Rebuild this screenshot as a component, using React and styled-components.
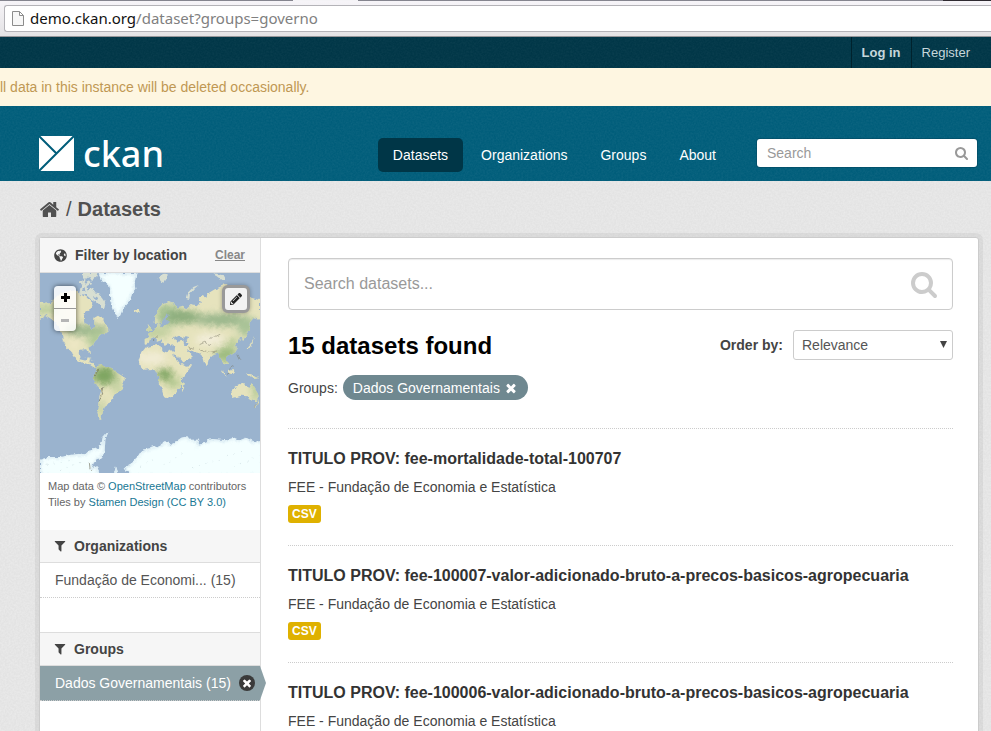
import React from "react";
import styled, { createGlobalStyle, css } from "styled-components";
import { FaGlobeAmericas, FaPencilAlt } from "react-icons/fa";

const grain = (opacity) =>
  `url("data:image/svg+xml,${encodeURIComponent(
    `<svg xmlns='http://www.w3.org/2000/svg' width='100' height='100'><filter id='n'><feTurbulence type='fractalNoise' baseFrequency='0.55' numOctaves='2' stitchTiles='stitch'/><feColorMatrix values='0 0 0 0 1  0 0 0 0 1  0 0 0 0 1  1.6 0 0 0 -0.5'/></filter><rect width='100' height='100' filter='url(#n)' opacity='${opacity}'/></svg>`
  )}")`;

const Global = createGlobalStyle`
  *, *::before, *::after { box-sizing: border-box; }
  body {
    margin: 0;
    font: 14px/20px "Liberation Sans", Arial, sans-serif;
    color: #444;
    background: #e8e8e8;
  }
  h1, h2, h3, p, ul { margin: 0; padding: 0; }
  ul { list-style: none; }
  a { color: inherit; text-decoration: none; }
  button, input, select { font: inherit; color: inherit; margin: 0; }
  button { border: 0; padding: 0; background: none; cursor: pointer; }
  svg { display: block; }
`;

const Page = styled.div`
  display: flex;
  flex-direction: column;
  height: 100vh;
  overflow: hidden;
`;

/* Browser toolbar */
const TabEdge = styled.div`
  flex: none;
  display: flex;
  height: 1px;
  background: #85858f;
  &::before { content: ""; width: 65px; margin-left: 293px; background: #f4f3f6; }
  &::after { content: ""; width: 48px; margin-left: auto; background: #2f2a31; }
`;
const Toolbar = styled.div`
  flex: none;
  height: 36px;
  padding: 4px 0 0 4px;
  background: linear-gradient(#f6f4f8, #e4e3e5);
  border-bottom: 1px solid #96969a;
`;
const AddressField = styled.div`
  display: flex;
  align-items: center;
  gap: 6px;
  height: 27px;
  padding: 0 0 1px 7px;
  background: #fff;
  border: 1px solid #b4b3b8;
  border-right: 0;
  border-radius: 3px 0 0 3px;
`;
const Address = styled.div`
  font: 15px/22px "Noto Sans", "Open Sans", sans-serif;
  color: #808080;
  span { color: #111; }
`;

/* Header */
const AccountBar = styled.nav`
  flex: none;
  display: flex;
  justify-content: flex-end;
  height: 31px;
  padding-right: 11px;
  background: ${grain(0.04)} #003647;
`;
const AccountLink = styled.a`
  padding: 0 10px;
  border-left: 1px solid #00222d;
  font-size: 13px;
  font-weight: ${(p) => (p.$strong ? 700 : 400)};
  line-height: 31px;
  color: #c6d7db;
`;
const Notice = styled.p`
  flex: none;
  height: 38px;
  line-height: 38px;
  background: #fef6e1;
  color: #c09853;
  white-space: nowrap;
`;
const Masthead = styled.header`
  flex: none;
  display: flex;
  align-items: center;
  height: 75px;
  padding: 23px 14px 0 39px;
  background: ${grain(0.05)} #005d7a;
  color: #fff;
`;
const Logo = styled.a`
  display: flex;
  align-items: center;
  gap: 8px;
  height: 36px;
  margin: 0 auto 2px 0;
  font: 500 36px/36px "Noto Sans", "Open Sans", sans-serif;
`;
const MainNav = styled.nav`
  display: flex;
  gap: 3px;
  margin-right: 26px;
`;
const NavLink = styled.a`
  padding: 0 15px;
  border-radius: 5px;
  line-height: 34px;
  ${(p) => p.$active && css`background: #003647;`}
`;
const SiteSearch = styled.form`
  display: flex;
  align-items: center;
  width: 220px;
  height: 28px;
  margin-bottom: 4px;
  padding: 0 8px 0 10px;
  background: #fff;
  border-radius: 3px;
  box-shadow: 0 0 0 1px rgba(0, 40, 60, 0.25);
  color: #999;
`;
const PlainInput = styled.input`
  flex: 1;
  min-width: 0;
  padding: 0;
  border: 0;
  outline: 0;
  background: transparent;
  color: #555;
  &::placeholder { color: #999; opacity: 1; }
`;

/* Body */
const Content = styled.main`
  flex: 1;
  min-height: 0;
  overflow: auto;
  scrollbar-width: none;
  padding: 0 12px 0 39px;
  background: ${grain(0.3)} #e3e3e3;
`;
const Breadcrumb = styled.nav`
  display: flex;
  align-items: center;
  gap: 6px;
  height: 56px;
  font-size: 20px;
  color: #505050;
`;
const Wrapper = styled.div`
  display: grid;
  grid-template-columns: 221px 1fr;
  background: #fff;
  border: 1px solid #ccc;
  border-radius: 3px;
  box-shadow: 0 0 0 4px rgba(0, 0, 0, 0.05);
`;
const Sidebar = styled.aside`
  border-right: 1px solid #ddd;
`;
const Module = styled.section`
  margin-bottom: ${(p) => p.$gap || 0}px;
`;
const ModuleHeading = styled.h2`
  display: flex;
  align-items: center;
  gap: 8px;
  height: ${(p) => p.$height || 33}px;
  padding: 0 15px 0 14px;
  background: #f6f6f6;
  border: 0 solid #ddd;
  border-width: ${(p) => (p.$ruled ? 1 : 0)}px 0 1px;
  font-size: 14px;
  line-height: 18px;
`;
const ClearLink = styled.a`
  margin-left: auto;
  font-size: 12px;
  color: #888;
  text-decoration: underline;
`;
const MapBox = styled.div`
  position: relative;
  height: 200px;
  background: #9ab3ce;
  overflow: hidden;
  > svg { width: 100%; height: 100%; }
`;
const ZoomButtons = styled.div`
  position: absolute;
  top: 13px;
  left: 14px;
  border-radius: 4px;
  background: rgba(255, 255, 255, 0.85);
  box-shadow: 0 0 5px rgba(0, 0, 0, 0.6);
`;
const ZoomButton = styled.button`
  display: grid;
  place-items: center;
  width: 22px;
  height: 22px;
  color: #000;
  & + & { height: 23px; border-top: 1px solid #999; }
  &:disabled { color: #b5b5b5; }
`;
const DrawButton = styled.button`
  position: absolute;
  top: 12px;
  right: 10px;
  display: grid;
  place-items: center;
  width: 28px;
  height: 28px;
  border: 3px solid #999;
  border-radius: 6px;
  background: #f2f2f2;
  box-shadow: 0 0 4px rgba(0, 0, 0, 0.3);
  color: #222;
`;
const Attribution = styled.p`
  padding: 5px 8px 0;
  height: 57px;
  font-size: 11px;
  line-height: 16px;
  white-space: nowrap;
  color: #666;
  a { color: #187794; }
`;
const Facet = styled.a`
  position: relative;
  display: flex;
  align-items: center;
  gap: 8px;
  height: 35px;
  padding-left: 15px;
  border-bottom: 1px dotted #ccc;
  color: #555;
  white-space: nowrap;
  ${(p) => p.$active && css`
    background: #8ca0a6;
    color: #fff;
    &::after {
      content: "";
      position: absolute;
      top: 0;
      left: 100%;
      width: 6px;
      height: 34px;
      background: #8ca0a6;
      clip-path: polygon(0 0, 100% 50%, 0 100%);
    }
  `}
`;
const RemoveDot = styled.span`
  display: grid;
  place-items: center;
  width: 16px;
  height: 16px;
  border-radius: 50%;
  background: #3a3a3a;
  color: #fff;
`;
const Primary = styled.section`
  min-width: 0;
  padding: 20px 25px 0 27px;
`;
const DatasetSearch = styled.form`
  display: flex;
  align-items: center;
  height: 52px;
  padding: 0 13px 0 15px;
  border: 1px solid #ccc;
  border-radius: 4px;
  box-shadow: inset 0 1px 1px rgba(0, 0, 0, 0.08);
  font-size: 16px;
  color: #ccc;
`;
const ResultsBar = styled.div`
  display: flex;
  align-items: center;
  justify-content: space-between;
  height: 30px;
  margin-top: 20px;
`;
const ResultsTitle = styled.h1`
  padding-top: 2px;
  font-size: 24px;
  line-height: 30px;
  color: #000;
`;
const OrderBy = styled.label`
  display: flex;
  align-items: center;
  gap: 10px;
  font-weight: 700;
`;
const SelectBox = styled.span`
  position: relative;
  width: 160px;
  font-weight: 400;
  > svg { position: absolute; right: 6px; top: 11px; pointer-events: none; }
`;
const Select = styled.select`
  display: block;
  width: 100%;
  height: 30px;
  padding: 0 8px;
  appearance: none;
  border: 1px solid #ccc;
  border-radius: 3px;
  background: #fff;
  color: #555;
`;
const Filters = styled.div`
  display: flex;
  align-items: center;
  gap: 5px;
  height: 25px;
  margin: 15px 0 28px;
  line-height: 18px;
`;
const Pill = styled.span`
  display: flex;
  align-items: center;
  gap: 4px;
  height: 25px;
  padding: 0 10px;
  border-radius: 13px;
  background: #6f8890;
  color: #fff;
`;
const Dataset = styled.li`
  min-height: 117px;
  padding-top: 20px;
  border-top: 1px dotted #ccc;
`;
const DatasetTitle = styled.h3`
  font-size: 16px;
  line-height: 20px;
  color: #333;
`;
const Organization = styled.p`
  margin: 8px 0;
`;
const Format = styled.a`
  display: block;
  width: max-content;
  padding: 0 4px;
  border-radius: 3px;
  background: #dfb100;
  color: #fff;
  font-size: 12px;
  font-weight: 700;
  line-height: 18px;
`;

const paths = {
  search:
    "M1152 832q0-185-131.5-316.5t-316.5-131.5-316.5 131.5-131.5 316.5 131.5 316.5 316.5 131.5 316.5-131.5 131.5-316.5zm512 832q0 52-38 90t-90 38q-54 0-90-38l-343-342q-179 124-399 124-143 0-273.5-55.5t-225-150-150-225-55.5-273.5 55.5-273.5 150-225 225-150 273.5-55.5 273.5 55.5 225 150 150 225 55.5 273.5q0 220-124 399l343 343q37 37 37 90z",
  filter:
    "M1595 295q17 41-14 70l-493 493v742q0 42-39 59-13 5-25 5-27 0-45-19l-256-256q-19-19-19-45v-486l-493-493q-31-29-14-70 17-39 59-39h1280q42 0 59 39z",
  home:
    "M1472 992v480q0 26-19 45t-45 19h-384v-384h-256v384h-384q-26 0-45-19t-19-45v-480q0-1 .5-3t.5-3l575-474 575 474q1 2 1 6zm223-69l-62 74q-8 9-21 11h-3q-13 0-21-7l-692-577-692 577q-12 8-24 7-13-2-21-11l-62-74q-8-10-7-23.5t11-21.5l719-599q32-26 76-26t76 26l244 204v-195q0-14 9-23t23-9h192q14 0 23 9t9 23v408l219 182q10 8 11 21.5t-7 23.5z",
  times:
    "M1490 1322q0 40-28 68l-136 136q-28 28-68 28t-68-28l-294-294-294 294q-28 28-68 28t-68-28l-136-136q-28-28-28-68t28-68l294-294-294-294q-28-28-28-68t28-68l136-136q28-28 68-28t68 28l294 294 294-294q28-28 68-28t68 28l136 136q28 28 28 68t-28 68l-294 294 294 294q28 28 28 68z",
};

const Icon = ({ name, size, box = "0 0 1792 1792" }) => (
  <svg width={size} height={size} viewBox={box} fill="currentColor" aria-hidden="true">
    <path d={paths[name]} />
  </svg>
);

const land = [
  "M0 86L14 92 30 90 60 60 110 52 125 66 146 78 160 92 152 108 136 118 130 132 134 150 148 156 154 172 162 160 163 134 174 128 186 136 192 150 206 162 208 170 196 180 182 184 176 194 164 206 158 218 146 226 150 240 144 238 138 228 122 230 116 242 120 258 134 262 142 254 150 256 148 268 158 270 162 280 172 286 160 284 144 274 126 268 108 258 94 236 80 222 68 202 66 178 48 150 34 138 16 126 0 138Z",
  "M170 280L184 276 198 282 220 286 232 300 255 314 250 332 246 348 228 362 220 376 206 394 194 402 188 420 182 428 184 440 176 436 172 420 178 398 178 370 184 352 170 336 160 312 168 298Z",
  "M318 222L352 216 362 220 364 232 380 238 396 232 410 236 414 252 424 270 438 278 456 276 438 302 426 316 426 336 408 356 396 372 382 378 372 372 366 352 356 330 358 314 348 292 332 288 314 290 300 278 296 264 304 240Z",
  "M426 332L434 330 432 346 426 358Z",
  "M314 214L314 198 328 192 324 182 340 176 348 166 356 156 344 148 346 132 352 112 368 92 386 84 400 90 410 104 428 98 442 106 452 96 470 100 484 86 476 74 488 66 500 74 502 62 522 50 544 40 558 32 576 44 606 64 634 74 660 82 660 140 640 136 628 150 630 172 618 190 610 200 600 194 596 206 586 212 590 226 580 242 566 248 558 256 564 272 556 276 546 266 540 250 530 240 520 244 508 254 502 278 494 268 488 246 476 240 460 238 448 228 440 230 454 246 458 254 440 264 428 272 414 250 404 232 406 216 392 218 384 210 374 216 366 202 354 206 342 192 330 198 326 210Z",
  "M574 352L590 340 604 334 616 330 622 342 630 344 634 330 642 340 652 356 656 370 648 384 634 382 622 370 604 368 582 374 576 366Z",
  "M318 174L326 164 322 150 332 166 334 174Z",
  "M282 112L296 110 300 118 290 122 282 118Z",
  "M642 402L650 390 654 378 656 386 648 400Z",
  "M540 290L556 304 562 312 550 304Z",
  "M564 292L578 288 582 302 568 304Z",
  "M620 302L634 304 646 312 658 316 644 318 628 308Z",
  "M620 226L630 214 638 200 642 188 638 208 626 226Z",
  "M132 252L150 258 166 262 148 256Z",
].join("");

const arcticIslands =
  "M116 62L126 30 140 14 136 36 146 22 156 30 148 48 164 44 160 58 174 60 186 76 196 90 192 108 180 100 168 88 150 76 138 66Z M124 0L172 0 168 14 156 24 148 12 134 18Z M356 16L364 4 374 2 384 8 376 20 368 32Z M440 76L446 56 460 42 476 36 462 48 450 62 448 78Z M520 0L548 6 554 18 544 18Z M118 26L130 22 124 34Z";

const ice =
  "M175 0L184 22 204 36 210 56 210 82 222 112 236 138 242 124 248 108 268 86 276 64 286 50 284 28 290 0Z M0 560L26 552 60 552 92 546 120 542 136 544 150 530 172 526 184 514 188 494 206 474 196 500 194 532 186 556 170 558 160 572 156 586 172 580 180 610 0 610Z M220 610L228 580 238 610Z M254 582L276 570 296 546 306 530 330 526 352 520 374 508 398 512 424 494 442 490 450 500 478 500 474 518 490 508 516 498 556 502 582 494 600 502 618 494 644 506 670 504 670 610 270 610Z";

const WorldMap = () => (
  <svg viewBox="0 0 660 600" preserveAspectRatio="xMidYMid slice" role="img" aria-label="World map">
    <defs>
      <filter id="coast" x="-5%" y="-5%" width="110%" height="110%">
        <feTurbulence type="fractalNoise" baseFrequency="0.07" numOctaves="2" seed="4" />
        <feDisplacementMap in="SourceGraphic" scale="14" xChannelSelector="R" yChannelSelector="G" />
        <feGaussianBlur stdDeviation="1" />
      </filter>
      <filter id="soft" x="-40%" y="-40%" width="180%" height="180%">
        <feGaussianBlur stdDeviation="11" />
      </filter>
      <filter id="glow">
        <feGaussianBlur stdDeviation="5" />
      </filter>
      <clipPath id="land"><path d={land} /></clipPath>
      <clipPath id="ice"><path d={ice} /></clipPath>
    </defs>
    <rect width="660" height="600" fill="#9ab3ce" />
    <g filter="url(#coast)">
      <g clipPath="url(#land)">
        <rect x="-20" y="-20" width="700" height="640" fill="#e6e3bd" />
        <g filter="url(#soft)">
          <ellipse cx="15" cy="110" rx="42" ry="16" fill="#bccf9f" />
          <ellipse cx="140" cy="172" rx="66" ry="18" fill="#9cb78d" />
          <ellipse cx="168" cy="200" rx="24" ry="30" fill="#b1c998" />
          <ellipse cx="194" cy="308" rx="36" ry="28" fill="#7fa662" />
          <ellipse cx="232" cy="335" rx="14" ry="32" fill="#c3d1a0" />
          <ellipse cx="184" cy="410" rx="9" ry="30" fill="#b9cb9c" />
          <ellipse cx="374" cy="304" rx="26" ry="18" fill="#7fa562" />
          <ellipse cx="402" cy="330" rx="24" ry="18" fill="#b8cb94" />
          <ellipse cx="385" cy="125" rx="38" ry="34" fill="#a8c394" />
          <ellipse cx="430" cy="132" rx="55" ry="20" fill="#8cad7d" />
          <ellipse cx="545" cy="140" rx="82" ry="18" fill="#98b58a" />
          <ellipse cx="620" cy="160" rx="28" ry="32" fill="#a9c397" />
          <ellipse cx="345" cy="178" rx="50" ry="17" fill="#c0cf9f" />
          <ellipse cx="556" cy="245" rx="30" ry="24" fill="#9dbc80" />
          <ellipse cx="580" cy="212" rx="20" ry="18" fill="#b9cc98" />
          <ellipse cx="647" cy="350" rx="10" ry="35" fill="#aac58f" />
          <ellipse cx="335" cy="256" rx="46" ry="18" fill="#f1ecd6" />
          <ellipse cx="510" cy="200" rx="44" ry="16" fill="#f3eedb" />
          <ellipse cx="102" cy="212" rx="16" ry="18" fill="#efe8c6" />
        </g>
      </g>
      <path d={arcticIslands} fill="#d8dfd2" />
      <g fill="#9ab3ce">
        <path d="M398 196L414 188 428 194 436 202 414 206Z" />
        <path d="M430 188L444 192 440 204 448 216 436 216 432 204Z" />
        <path d="M372 138L382 118 386 126 380 140 390 146 378 158 362 160 358 154Z" />
        <path d="M402 240L426 268 422 274 400 246Z" />
        <path d="M140 40L150 34 156 40 144 56ZM126 52L134 42 136 56ZM160 70L172 72 176 82 166 80Z" />
      </g>
      <path d={ice} fill="#f4ffff" />
      <g clipPath="url(#ice)">
        <path d={ice} fill="none" stroke="#cfe3ee" strokeWidth="6" filter="url(#glow)" />
      </g>
      <g fill="none" stroke="#716f5c" strokeLinecap="round" strokeWidth="2">
        <path d="M166 306L176 288M188 344L184 366 178 384" />
        <path d="M476 216L494 208 512 214M482 232L510 238 530 234M512 196L528 190 540 184M446 222L458 228" opacity="0.7" />
        <path d="M340 200L352 190M562 300L572 304M644 400L650 392M594 246L602 262M570 286L580 280" opacity="0.7" />
        <path d="M148 568L150 586 158 592" />
      </g>
      <g stroke="#b3c9cf" strokeWidth="2" strokeDasharray="4 17" opacity="0.6">
        <path d="M20 574L90 562M60 590L130 566M300 584L350 548M370 576L430 540M456 584L540 558M560 548L620 530M580 580L640 556" />
      </g>
    </g>
  </svg>
);

const datasets = [
  { title: "TITULO PROV: fee-mortalidade-total-100707", formats: ["CSV"] },
  { title: "TITULO PROV: fee-100007-valor-adicionado-bruto-a-precos-basicos-agropecuaria", formats: ["CSV"] },
  { title: "TITULO PROV: fee-100006-valor-adicionado-bruto-a-precos-basicos-agropecuaria", formats: [] },
];
const stay = (e) => e.preventDefault();

export default function App() {
  return (
    <Page>
      <Global />
      <TabEdge />
      <Toolbar>
        <AddressField>
          <svg width="12" height="15" viewBox="0 0 12 15" fill="#f7f7f7" stroke="#8c8c8c" aria-hidden="true">
            <path d="M.5.5h7l4 4v10H.5zM7.5.5v4h4" />
          </svg>
          <Address><span>demo.ckan.org</span>/dataset?groups=governo</Address>
        </AddressField>
      </Toolbar>

      <AccountBar aria-label="Account">
        <AccountLink href="#login" $strong>Log in</AccountLink>
        <AccountLink href="#register">Register</AccountLink>
      </AccountBar>
      <Notice>ll data in this instance will be deleted occasionally.</Notice>
      <Masthead>
        <Logo href="#home">
          <svg width="36" height="36" viewBox="0 0 36 36" aria-hidden="true">
            <path d="M0 0h35v35H0z" fill="#fff" />
            <path d="M0 0L17 17M0 35L35 0" stroke="#005d7a" strokeWidth="2" />
          </svg>
          ckan
        </Logo>
        <MainNav aria-label="Main">
          <NavLink href="#datasets" $active>Datasets</NavLink>
          <NavLink href="#organizations">Organizations</NavLink>
          <NavLink href="#groups">Groups</NavLink>
          <NavLink href="#about">About</NavLink>
        </MainNav>
        <SiteSearch onSubmit={stay}>
          <PlainInput aria-label="Search" placeholder="Search" />
          <button aria-label="Submit search"><Icon name="search" size={14} /></button>
        </SiteSearch>
      </Masthead>

      <Content>
        <Breadcrumb aria-label="Breadcrumb">
          <a href="#home" aria-label="Home"><Icon name="home" size={21} box="64 0 1664 1792" /></a>
          <span>/</span>
          <a href="#datasets"><strong>Datasets</strong></a>
        </Breadcrumb>
        <Wrapper>
          <Sidebar>
            <Module>
              <ModuleHeading $height={35}>
                <FaGlobeAmericas size={13} />
                Filter by location
                <ClearLink href="#clear">Clear</ClearLink>
              </ModuleHeading>
              <MapBox>
                <WorldMap />
                <ZoomButtons>
                  <ZoomButton aria-label="Zoom in">
                    <svg width="9" height="9" viewBox="0 0 9 9" fill="currentColor"><path d="M3 0h3v3h3v3H6v3H3V6H0V3h3z" /></svg>
                  </ZoomButton>
                  <ZoomButton aria-label="Zoom out" disabled>
                    <svg width="8" height="3" viewBox="0 0 8 3" fill="currentColor"><path d="M0 0h8v3H0z" /></svg>
                  </ZoomButton>
                </ZoomButtons>
                <DrawButton aria-label="Draw area"><FaPencilAlt size={12} /></DrawButton>
              </MapBox>
              <Attribution>
                Map data © <a href="#osm">OpenStreetMap</a> contributors<br />
                Tiles by <a href="#stamen">Stamen Design</a> <a href="#license">(CC BY 3.0)</a>
              </Attribution>
            </Module>
            <Module $gap={34}>
              <ModuleHeading><Icon name="filter" size={12} box="128 128 1536 1600" />Organizations</ModuleHeading>
              <Facet href="#fee">Fundação de Economi... (15)</Facet>
            </Module>
            <Module>
              <ModuleHeading $ruled $height={34}><Icon name="filter" size={12} box="128 128 1536 1600" />Groups</ModuleHeading>
              <Facet href="#dados" $active>
                Dados Governamentais (15)
                <RemoveDot><Icon name="times" size={12} /></RemoveDot>
              </Facet>
            </Module>
          </Sidebar>
          <Primary>
            <DatasetSearch onSubmit={stay}>
              <PlainInput aria-label="Search datasets" placeholder="Search datasets..." />
              <button aria-label="Search"><Icon name="search" size={28} /></button>
            </DatasetSearch>
            <ResultsBar>
              <ResultsTitle>15 datasets found</ResultsTitle>
              <OrderBy>
                Order by:
                <SelectBox>
                  <Select defaultValue="Relevance">
                    <option>Relevance</option>
                    <option>Name Ascending</option>
                  </Select>
                  <svg width="7" height="7" viewBox="0 0 7 7" aria-hidden="true"><path d="M0 0h7L3.5 7z" fill="#444" /></svg>
                </SelectBox>
              </OrderBy>
            </ResultsBar>
            <Filters>
              Groups:
              <Pill>
                Dados Governamentais
                <button aria-label="Remove filter"><Icon name="times" size={14} /></button>
              </Pill>
            </Filters>
            <ul>
              {datasets.map(({ title, formats }) => (
                <Dataset key={title}>
                  <DatasetTitle><a href="#dataset">{title}</a></DatasetTitle>
                  <Organization>FEE - Fundação de Economia e Estatística</Organization>
                  {formats.map((f) => <Format key={f} href="#csv">{f}</Format>)}
                </Dataset>
              ))}
            </ul>
          </Primary>
        </Wrapper>
      </Content>
    </Page>
  );
}
